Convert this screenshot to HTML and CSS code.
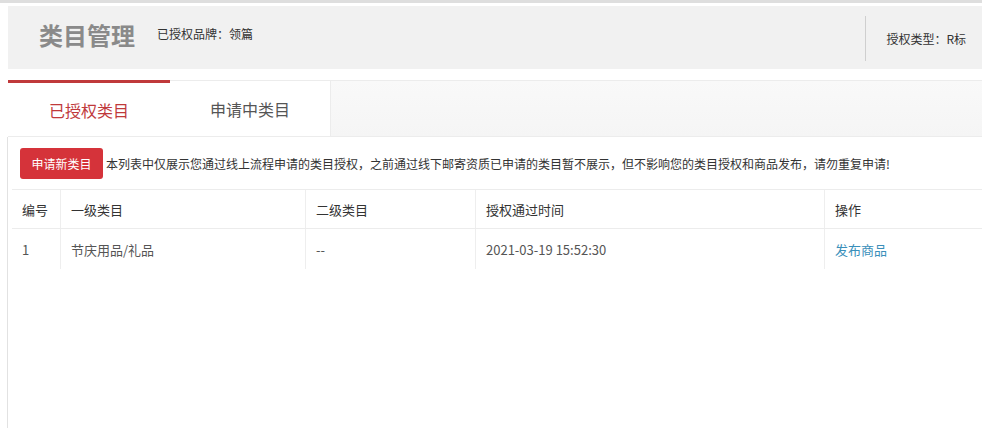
FILE: index.html
```html
<!DOCTYPE html>
<html lang="zh-CN">
<head>
    <meta charset="UTF-8">
    <title>类目管理</title>
    <link rel="stylesheet" href="styles.css">
</head>
<body>
    <div class="page">
        <div class="head">
            <h1>类目管理</h1>
            <span class="brand">已授权品牌：领篇</span>
            <div class="head-right">授权类型：R标</div>
        </div>

        <div class="tabs">
            <div class="tab active">已授权类目</div>
            <div class="tab">申请中类目</div>
        </div>

        <div class="panel">
            <div class="notice">
                <button class="btn">申请新类目</button>
                <span>本列表中仅展示您通过线上流程申请的类目授权，之前通过线下邮寄资质已申请的类目暂不展示，但不影响您的类目授权和商品发布，请勿重复申请!</span>
            </div>

            <table class="list">
                <thead>
                    <tr>
                        <th class="c-no">编号</th>
                        <th class="c-one">一级类目</th>
                        <th class="c-two">二级类目</th>
                        <th class="c-time">授权通过时间</th>
                        <th>操作</th>
                    </tr>
                </thead>
                <tbody>
                    <tr>
                        <td>1</td>
                        <td>节庆用品/礼品</td>
                        <td>--</td>
                        <td>2021-03-19 15:52:30</td>
                        <td><a href="#">发布商品</a></td>
                    </tr>
                </tbody>
            </table>
        </div>
    </div>
</body>
</html>
```

FILE: styles.css
```css
body {
    margin: 0;
    font-family: "Noto Sans CJK SC", "Noto Sans", sans-serif;
    color: #333;
    background: #fff;
    border-top: 3px solid #dedede;
    height: 425px;
    overflow: hidden;
}

.page {
    padding: 3px 0 0 8px;
}

.head {
    display: flex;
    align-items: center;
    height: 63px;
    background: #f1f1f1;
}

.head h1 {
    margin: 0 0 0 31px;
    font-size: 24px;
    font-weight: bold;
    color: #8a8a8a;
    line-height: 1;
    position: relative;
    top: -3px;
}

.brand {
    margin-left: 22px;
    font-size: 12px;
    color: #333;
    align-self: flex-start;
    margin-top: 19px;
}

.head-right {
    margin-left: auto;
    height: 45px;
    border-left: 1px solid #cfcfcf;
    padding: 0 16px 0 20px;
    display: flex;
    align-items: center;
    font-size: 12px;
    color: #333;
    position: relative;
    top: 1px;
}

.tabs {
    display: flex;
    margin-top: 11px;
    height: 55px;
    background: linear-gradient(#f9f9f9, #f5f5f5);
    border-top: 1px solid #ececec;
    border-bottom: 1px solid #ececec;
}

.tab {
    width: 160px;
    display: flex;
    align-items: center;
    justify-content: center;
    font-size: 16px;
    color: #555;
    background: #fff;
    border-right: 1px solid #ececec;
}

.tab.active {
    width: 162px;
    color: #c0393b;
    border-top: 3px solid #c0393b;
    margin-top: -1px;
    border-right: none;
}

.panel {
    border-left: 1px solid #e2e2e2;
    margin-left: -1px;
    padding-left: 4px;
    height: 300px;
}

.notice {
    display: flex;
    align-items: center;
    padding: 11px 0 0 8px;
    font-size: 12px;
    color: #333;
}

.btn {
    width: 83px;
    height: 31px;
    border: none;
    border-radius: 3px;
    background: #d5333a;
    color: #fff;
    font-family: inherit;
    font-size: 12px;
    padding: 0;
    margin-right: 3px;
}

.list {
    margin-top: 10px;
    width: 975px;
    border-collapse: collapse;
    font-size: 13px;
}

.list th,
.list td {
    text-align: left;
    padding: 0 0 0 10px;
    border-left: 1px solid #eee;
}

.list th:first-child,
.list td:first-child {
    border-left: none;
}

.list th {
    height: 38px;
    font-weight: normal;
    color: #333;
    border-top: 1px solid #ececec;
    border-bottom: 1px solid #ececec;
}

.list td {
    height: 40px;
    color: #555;
}

.c-no { width: 38px; }
.c-one { width: 234px; }
.c-two { width: 159px; }
.c-time { width: 338px; }

.list a {
    color: #3a8fba;
    text-decoration: none;
}
```
